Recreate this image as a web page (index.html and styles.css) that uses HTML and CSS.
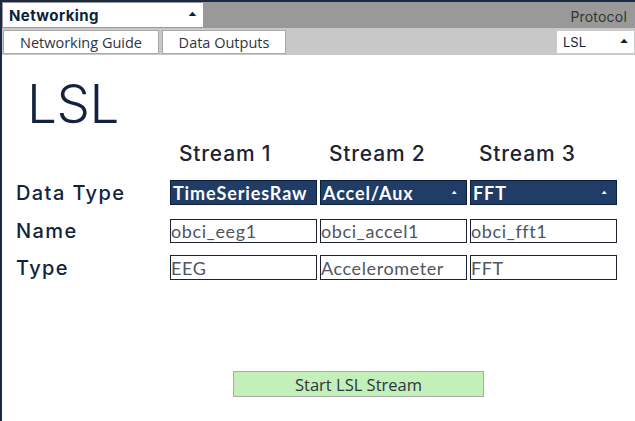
FILE: index.html
```html
<!DOCTYPE html>
<html>
<head>
<meta charset="utf-8">
<link rel="stylesheet" href="styles.css">
</head>
<body>
<div class="app">
  <div class="topbar">
    <div class="select select-main">
      <span class="select-label">Networking</span>
      <span class="arrow">&#9650;</span>
    </div>
    <span class="protocol-label">Protocol</span>
  </div>
  <div class="tabbar">
    <button class="tab tab-guide">Networking Guide</button>
    <button class="tab tab-outputs">Data Outputs</button>
    <div class="select select-protocol">
      <span class="select-label">LSL</span>
      <span class="arrow">&#9650;</span>
    </div>
  </div>
  <main class="content">
    <h1 class="title">LSL</h1>
    <div class="grid">
      <div class="cell"></div>
      <div class="col-head">Stream 1</div>
      <div class="col-head">Stream 2</div>
      <div class="col-head">Stream 3</div>

      <div class="row-label label-dt">Data Type</div>
      <div class="dd"><span>TimeSeriesRaw</span></div>
      <div class="dd"><span>Accel/Aux</span><span class="arrow light">&#9650;</span></div>
      <div class="dd"><span>FFT</span><span class="arrow light">&#9650;</span></div>

      <div class="row-label label-name">Name</div>
      <div class="field f-name">obci_eeg1</div>
      <div class="field f-name">obci_accel1</div>
      <div class="field f-name">obci_fft1</div>

      <div class="row-label label-type">Type</div>
      <div class="field f-type">EEG</div>
      <div class="field f-type">Accelerometer</div>
      <div class="field f-type">FFT</div>
    </div>
    <div class="actions">
      <button class="start">Start LSL Stream</button>
    </div>
  </main>
</div>
</body>
</html>
```
FILE: styles.css
```css
* { box-sizing: border-box; }
html, body { margin: 0; padding: 0; }
body {
  width: 635px;
  height: 421px;
  overflow: hidden;
  background: #ffffff;
  font-family: "Open Sans", sans-serif;
}
.app {
  width: 635px;
  height: 421px;
  border-top: 2px solid #1c2a44;
  border-left: 2px solid #1c2a44;
  display: flex;
  flex-direction: column;
}
.topbar {
  height: 26px;
  background: #999999;
  display: flex;
  align-items: stretch;
  padding: 1px 0 1px 1px;
}
.select {
  background: #ffffff;
  display: flex;
  align-items: center;
  justify-content: space-between;
  color: #0f1f38;
}
.select-main {
  width: 200px;
  padding: 0 6px 0 6px;
  font-family: "Inter", sans-serif;
  font-weight: 700;
  font-size: 15px;
  letter-spacing: 0.4px;
}
.arrow {
  font-size: 8px;
  line-height: 1;
  color: #0f1f38;
  margin-top: -2px;
  transform: scaleY(0.7);
}
.arrow.light { color: #ffffff; }
.protocol-label {
  margin-left: auto;
  align-self: flex-end;
  padding: 0 8px 1px 0;
  font-family: "Inter", sans-serif;
  font-size: 14px;
  color: #333333;
  line-height: 18px;
  letter-spacing: 0.2px;
}
.tabbar {
  height: 27px;
  background: #c8c8c8;
  display: flex;
  align-items: stretch;
  padding: 2px 0 1px 1px;
  gap: 3px;
}
.tab {
  background: #ffffff;
  border: 1px solid #aaaaaa;
  font-family: "Open Sans", sans-serif;
  font-size: 14.5px;
  color: #2e3440;
  padding: 0;
  margin: 0;
}
.tab-guide { width: 156px; }
.tab-outputs { width: 124px; }
.select-protocol {
  margin-left: auto;
  width: 79px;
  padding: 0 6px 0 6px;
  font-family: "Inter", sans-serif;
  font-size: 13px;
  border: 1px solid #cccccc;
}
.content {
  flex: 1;
  display: flex;
  flex-direction: column;
  padding: 0 0 0 14px;
}
.title {
  margin: 19px 0 0 11px;
  font-family: "Inter", sans-serif;
  font-weight: 300;
  font-size: 53px;
  line-height: 60px;
  color: #13223d;
  letter-spacing: -0.5px;
}
.grid {
  display: grid;
  grid-template-columns: 151px 147px 147px 147px;
  column-gap: 3px;
  margin-top: 5px;
  align-items: center;
}
.col-head {
  padding-left: 9px;
  font-family: "Inter", sans-serif;
  font-weight: 500;
  font-size: 21px;
  color: #1c2333;
  line-height: 30px;
  letter-spacing: 0.8px;
}
.row-label {
  font-family: "Inter", sans-serif;
  font-weight: 500;
  font-size: 20px;
  letter-spacing: 1.4px;
  color: #13223d;
}
.dd {
  height: 25px;
  margin-top: 11px;
  background: #1f3d66;
  border: 1px solid #0f1f38;
  color: #ffffff;
  display: flex;
  align-items: center;
  justify-content: space-between;
  padding: 0 7px 0 2px;
  font-family: "Lato", sans-serif;
  font-weight: 700;
  font-size: 18px;
  letter-spacing: 0.9px;
  white-space: nowrap;
  overflow: hidden;
}
.field {
  height: 24px;
  background: #ffffff;
  border: 1px solid #1c2333;
  color: #4f5563;
  display: flex;
  align-items: center;
  padding: 0;
  font-family: "Lato", sans-serif;
  font-size: 18px;
  letter-spacing: 0.6px;
  white-space: nowrap;
  overflow: hidden;
}
.f-name { margin-top: 14px; }
.f-type { margin-top: 12px; height: 25px; }
.label-dt { margin-top: 11px; }
.label-name { margin-top: 14px; }
.label-type { margin-top: 12px; }
.actions {
  display: flex;
  padding-left: 217px;
  margin-top: 91px;
}
.start {
  width: 251px;
  height: 26px;
  background: #c2f0b8;
  border: 1px solid #aaaaaa;
  font-family: "Open Sans", sans-serif;
  font-size: 16.5px;
  color: #2e3440;
  padding: 0;
  margin: 0;
}
```
